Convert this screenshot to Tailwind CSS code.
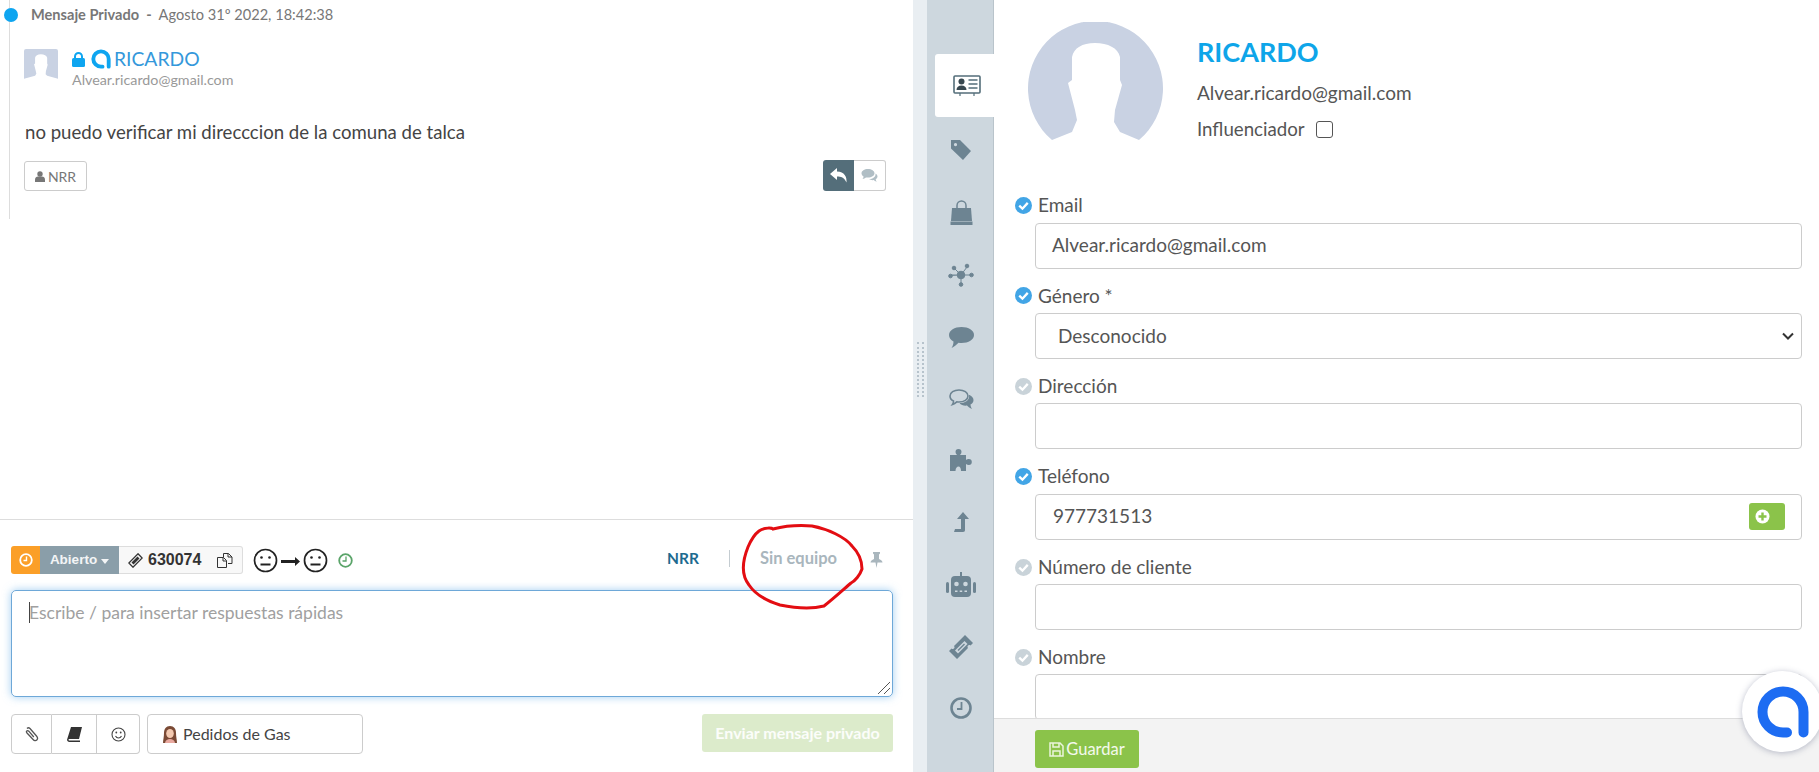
<!DOCTYPE html>
<html>

<head>
    <meta charset="UTF-8">
    <title>Ticket 630074</title>
    <script src="https://cdn.jsdelivr.net/npm/@tailwindcss/browser@4"></script>
</head>

<body class="relative h-screen overflow-hidden flex bg-white text-[#555] font-['Lato','Liberation_Sans',sans-serif]">

    <!-- conversation -->
    <div class="w-[913px] h-full flex flex-col">
        <div class="h-[520px] border-b border-[#ddd] relative pl-[9px]">
            <div class="h-[219px] border-l border-[#ddd] absolute left-[9px] top-0"></div>
            <div class="absolute left-[4px] top-[8px] w-[14px] h-[14px] rounded-full bg-[#0ea5f0]"></div>
            <div class="relative pl-[22px] pt-[5px] flex items-center text-[14.600px] leading-[20px] text-[#777]">
                <span class="font-bold">Mensaje Privado</span>
                <span class="mx-[7px] font-bold">-</span>
                <span>Agosto 31º 2022, 18:42:38</span>
            </div>
            <div class="relative pl-[15px] pt-[24px] flex">
                <svg class="w-[34px] h-[34px]" viewBox="0 0 135 135">
                    <rect width="135" height="135" rx="8" fill="#c9d2e3" />
                    <path d="M0 135V118L44 106 49 98 47 88 40 61 44 58V35C46 26 54 21 67 21S90 26 92 35V58L94 63 87 88 86 100 92 106 135 118V135z" fill="#fff" />
                </svg>
                <div class="ml-[14px] -mt-[1px]">
                    <div class="flex items-center h-[22px] text-[19.300px] text-[#3498db]">
                        <svg class="w-[13px] h-[15px] mr-[6px]" viewBox="0 0 13 15">
                            <path d="M3 7V4.500a3.500 3.500 0 0 1 7 0V7" fill="none" stroke="#0ea5f0" stroke-width="2" />
                            <rect y="6" width="13" height="9" rx="1.500" fill="#0ea5f0" />
                        </svg>
                        <svg class="w-[20px] h-[20px] mr-[3px]" viewBox="0 0 52 52">
                            <path d="M30 46H26A20 20 0 1 1 46 26V46" fill="none" stroke="#0ea5f0" stroke-width="10" stroke-linecap="round" />
                        </svg>
                        <span>RICARDO</span>
                    </div>
                    <div class="text-[14.300px] leading-[20px] text-[#999]">Alvear.ricardo@gmail.com</div>
                </div>
            </div>
            <p class="relative pl-[16px] mt-[29px] text-[18.600px] leading-[26px] text-[#444]">no puedo verificar mi direcccion de la comuna de talca</p>
            <div class="relative pl-[15px] pr-[27px] mt-[16px] flex justify-between items-center">
                <button class="w-[63px] h-[30px] border border-[#ccc] rounded-[3px] flex items-center justify-center text-[14px] text-[#777]">
                    <svg class="w-[10px] h-[11px] mr-[3px]" viewBox="0 0 10 11" fill="#777">
                        <circle cx="5" cy="3" r="2.700" />
                        <path d="M0 11V8.500C0 6.500 1.500 5.500 3 5.500h4c1.500 0 3 1 3 3V11z" />
                    </svg>
                    NRR
                </button>
                <div class="flex h-[31px] -mt-[2px]">
                    <div class="w-[31px] bg-[#546e7a] rounded-l-[3px] flex items-center justify-center">
                        <svg class="w-[18px] h-[15px]" viewBox="0 0 18 15" fill="#fff">
                            <path d="M7 0 0 6l7 6V8.500c4 0 7 .5 9.500 6 .5-6-2-10.500-9.500-11z" />
                        </svg>
                    </div>
                    <div class="w-[32px] border border-l-0 border-[#ccc] rounded-r-[3px] flex items-center justify-center">
                        <svg class="w-[17px] h-[15px]" viewBox="0 0 17 15" fill="#b0bec5">
                            <path d="M7 1c3.600 0 6.500 1.900 6.500 4.300S10.600 9.600 7 9.600c-.7 0-1.400-.1-2-.2C4 10.300 2.800 10.800 1.500 11c.7-.7 1-1.500 1.100-2.400C1.300 7.800.5 6.600.5 5.300.5 2.900 3.400 1 7 1z" />
                            <path d="M14.500 5.500c1.300.8 2 1.800 2 3 0 1.100-.7 2.100-1.800 2.800.1.900.4 1.800 1 2.500-1.200-.2-2.300-.8-3.100-1.700-1.700.2-3.400-.2-4.600-1.100 3.500.1 7-1.800 6.500-5.500z" />
                        </svg>
                    </div>
                </div>
            </div>
        </div>

        <!-- compose -->
        <div class="flex-1 pl-[11px] pr-[20px]">
            <div class="h-[28px] mt-[26px] flex items-center">
                <div class="w-[29px] h-full bg-[#fb9f28] rounded-l-[3px] flex items-center justify-center">
                    <svg class="w-[14px] h-[14px]" viewBox="0 0 14 14" fill="none" stroke="#fff" stroke-width="1.800">
                        <circle cx="7" cy="7" r="5.800" />
                        <path d="M7.500 3.500V7.500H4.500" stroke-width="1.400" />
                    </svg>
                </div>
                <div class="w-[79px] h-full bg-[#8a9ea9] flex items-center justify-center text-white/90 text-[13.500px] font-bold font-['Liberation_Sans',sans-serif]">
                    Abierto
                    <span class="ml-[4px] mt-[2px] border-x-[4.500px] border-x-transparent border-t-[5px] border-t-white/90"></span>
                </div>
                <div class="w-[124px] h-full bg-[#f8f8f8] border border-l-0 border-[#ddd] rounded-r-[3px] flex items-center pl-[9px] text-[16px] font-bold text-[#333] font-['Liberation_Sans',sans-serif]">
                    <svg class="w-[15px] h-[15px] mr-[5px]" viewBox="0 0 15 15" fill="none" stroke="#333" stroke-width="1.300">
                        <path d="M10 .8 14.200 5 5 14.200.8 10z" />
                        <path d="M9.500 3.500 11.500 5.500 5.500 11.500 3.500 9.500z" fill="#333" stroke="none" />
                    </svg>
                    630074
                    <svg class="w-[16px] h-[15px] ml-[16px]" viewBox="0 0 16 15" fill="none" stroke="#333" stroke-width="1">
                        <path d="M6.500 4.500V.5h5l3.500 3.500v6.500h-4M11 .5V4h4" />
                        <path d="M.5 4.500h6l3 3v7H.5zM6 4.500V8h3.500" fill="#f8f8f8" />
                    </svg>
                </div>
                <svg class="w-[25px] h-[25px] ml-[10px]" viewBox="0 0 25 25" fill="none" stroke="#222" stroke-width="1.700">
                    <circle cx="12.500" cy="12.500" r="11" />
                    <path d="M7.500 16.500h10" stroke-width="2" />
                    <circle cx="8.500" cy="9.500" r="1.300" fill="#222" stroke="none" />
                    <circle cx="16.500" cy="9.500" r="1.300" fill="#222" stroke="none" />
                </svg>
                <svg class="w-[19px] h-[9px] mx-[3px] mt-[3px]" viewBox="0 0 19 9" fill="#222">
                    <path d="M0 3h14V0l5 4.500L14 9V6H0z" />
                </svg>
                <svg class="w-[25px] h-[25px]" viewBox="0 0 25 25" fill="none" stroke="#222" stroke-width="1.700">
                    <circle cx="12.500" cy="12.500" r="11" />
                    <path d="M7.500 16.500h10" stroke-width="2" />
                    <circle cx="8.500" cy="9.500" r="1.300" fill="#222" stroke="none" />
                    <circle cx="16.500" cy="9.500" r="1.300" fill="#222" stroke="none" />
                </svg>
                <svg class="w-[15px] h-[15px] ml-[10px]" viewBox="0 0 15 15" fill="none" stroke="#5aa469" stroke-width="1.800">
                    <circle cx="7.500" cy="7.500" r="6.300" />
                    <path d="M8 3.500V8H4.500" stroke-width="1.300" />
                </svg>
                <span class="ml-auto -mt-[3px] text-[15.500px] font-bold text-[#1d6a8f]">NRR</span>
                <span class="ml-[30px] -mt-[3px] h-[17px] w-px bg-[#c4ccd1]"></span>
                <span class="ml-[30px] -mt-[3px] text-[16.500px] font-bold text-[#a9b6bd]">Sin equipo</span>
                <svg class="ml-[33px] mr-[10px] w-[13px] h-[16px]" viewBox="0 0 13 16" fill="#a9b6bd">
                    <path d="M3 0h7v1.500L9 2.500V7c2 1 3.500 2 3.500 3.500h-5l-1 5.500-1-5.500h-5C.5 9 2 8 4 7V2.500L3 1.500z" />
                </svg>
            </div>
            <div class="relative mt-[16px] h-[107px] border border-[#6ea8d8] rounded-[5px] shadow-[0_0_8px_rgba(102,175,233,0.6)] px-[17px] pt-[9px] text-[17.500px] leading-[26px] text-[#a0a0a0]">
                <span class="absolute left-[17px] top-[11px] w-px h-[21px] bg-[#444]"></span>
                Escribe / para insertar respuestas rápidas
                <svg class="absolute right-[1px] bottom-[1px] w-[14px] h-[14px]" viewBox="0 0 14 14" stroke="#555" stroke-width="1">
                    <path d="M1 13 13 1M7 13l6-6" />
                </svg>
            </div>
            <div class="mt-[17px] flex items-start">
                <button class="w-[41px] h-[40px] border border-[#ccc] rounded-l-[4px] flex items-center justify-center">
                    <svg class="w-[14px] h-[15px]" viewBox="0 0 14 15" fill="none" stroke="#555" stroke-width="1.300">
                        <path d="M3 1.500c1-1 2.200-.8 3 0l6.500 7.500c1.300 1.500 1.300 3 .3 4s-2.500.8-3.700-.5L3 6c-.7-.8-.7-1.500-.2-2s1.300-.5 2 .2l5 5.800" transform="translate(-1 0)" />
                    </svg>
                </button>
                <button class="w-[45px] h-[40px] border border-l-0 border-[#ccc] flex items-center justify-center">
                    <svg class="w-[15px] h-[15px]" viewBox="0 0 15 15" fill="#333">
                        <path d="M4 0h11l-3 12H2.500c-.8 0-1 .6-1 .8 0 .3.300.7 1 .7H13v1.500H2.500C1 15 0 14 0 12.800z" />
                    </svg>
                </button>
                <button class="w-[43px] h-[40px] border border-l-0 border-[#ccc] rounded-r-[4px] flex items-center justify-center">
                    <svg class="w-[15px] h-[15px]" viewBox="0 0 15 15" fill="none" stroke="#444" stroke-width="1.100">
                        <circle cx="7.500" cy="7.500" r="6.500" />
                        <path d="M4.500 9c.8 1.500 1.800 2 3 2s2.200-.5 3-2" />
                        <circle cx="5.300" cy="5.500" r=".9" fill="#444" stroke="none" />
                        <circle cx="9.700" cy="5.500" r=".9" fill="#444" stroke="none" />
                    </svg>
                </button>
                <div class="ml-[7px] w-[216px] h-[40px] border border-[#ccc] rounded-[4px] flex items-center pl-[15px] text-[16px] text-[#444]">
                    <svg class="w-[14px] h-[17px] mr-[6px]" viewBox="0 0 14 17">
                        <path d="M7 0c4 0 6 3 6 7 0 4 1 7 1 10H0c0-3 1-6 1-10 0-4 2-7 6-7z" fill="#7a4a35" />
                        <ellipse cx="7" cy="7.500" rx="3.800" ry="4.500" fill="#f3c9b0" />
                        <path d="M2 17c.5-3 2.500-4 5-4s4.500 1 5 4z" fill="#e9a9a0" />
                    </svg>
                    Pedidos de Gas
                </div>
                <button class="ml-auto w-[191px] h-[38px] rounded-[3px] bg-[#dcebcb] text-white/90 text-[16px] font-bold">Enviar mensaje privado</button>
            </div>
        </div>
    </div>

    <!-- resize handle -->
    <div class="w-[14px] h-full bg-[#e9eef2] flex items-center justify-center">
        <div class="w-[7px] h-[55px] mt-[-34px] border-x-2 border-dotted border-[#b7c3cc]"></div>
    </div>

    <!-- tabs -->
    <div class="w-[67px] h-full bg-[#cdd7de] border-r border-[#b9c4cb] pt-[54px] pl-[8px] flex flex-col">
        <div class="w-[59px] h-[63px] bg-white rounded-l-[3px] flex items-center justify-center pl-[4px] mb-[2px]">
            <svg class="w-[28px] h-[21px]" viewBox="0 0 28 21">
                <rect x="1" y="1" width="26" height="17" rx="1" fill="none" stroke="#546e7a" stroke-width="1.600" />
                <circle cx="8.500" cy="6.500" r="3" fill="#37474f" />
                <path d="M3.500 15c0-3 2-4.500 5-4.500s5 1.500 5 4.500z" fill="#37474f" />
                <path d="M15.500 5h9M15.500 9h9M15.500 13h9" stroke="#546e7a" stroke-width="1.500" />
                <path d="M7 18v3M21 18v3" stroke="#546e7a" stroke-width="1.200" />
            </svg>
        </div>
        <div class="w-[52px] h-[62px] flex items-center justify-center">
            <svg class="w-[22px] h-[22px]" viewBox="0 0 22 22" fill="#6d8492">
                <path d="M1 1h9l11 11-8 9L1 9.500zM5.500 4a1.600 1.600 0 1 0 .01 0z" fill-rule="evenodd" />
            </svg>
        </div>
        <div class="w-[52px] h-[62px] flex items-center justify-center">
            <svg class="w-[25px] h-[25px]" viewBox="0 0 25 25" fill="#6d8492">
                <path d="M3 8h19l1 13H2z" />
                <path d="M1.500 21.500h22V25h-22z" />
                <path d="M8 11V5.500a4.500 4.500 0 0 1 9 0V11" fill="none" stroke="#6d8492" stroke-width="1.500" />
            </svg>
        </div>
        <div class="w-[52px] h-[63px] flex items-center justify-center">
            <svg class="w-[26px] h-[24px]" viewBox="0 0 26 24" fill="#6d8492" stroke="#6d8492" stroke-width="1">
                <path d="M13 12 6 5M13 12l6-8M13 12H3l-1 1M13 12h10M13 12v9" />
                <circle cx="13" cy="12" r="3.800" />
                <circle cx="6" cy="5" r="1.800" />
                <circle cx="19" cy="3" r="1.800" />
                <circle cx="2.500" cy="13" r="1.800" />
                <circle cx="23.500" cy="12" r="1.800" />
                <circle cx="13" cy="21.500" r="1.800" />
            </svg>
        </div>
        <div class="w-[52px] h-[63px] flex items-center justify-center">
            <svg class="w-[25px] h-[21px]" viewBox="0 0 25 21" fill="#6d8492">
                <path d="M12.500 0C19.500 0 25 3.500 25 8s-5.500 8-12.500 8c-1 0-2-.1-3-.2C7.500 18 5 20 2.500 21c1-1.500 2-3.500 2-6.400C1.800 13.200 0 10.800 0 8 0 3.500 5.500 0 12.500 0z" />
            </svg>
        </div>
        <div class="w-[52px] h-[60px] flex items-center justify-center">
            <svg class="w-[25px] h-[21px]" viewBox="0 0 25 21">
                <path d="M10 1c5 0 9 2.500 9 6s-4 6-9 6c-.8 0-1.500 0-2.200-.2C6.500 14 5 15 3.500 15.500c.7-1 1-2 1-3.500C2.300 11 1 9 1 7c0-3.500 4-6 9-6z" fill="none" stroke="#6d8492" stroke-width="1.600" />
                <path d="M20.500 6c2.500 1 4 3 4 5s-1.200 3.700-3 4.600c.1 1.500.5 3 1.500 4.400-2-.5-3.800-2-5-3.400-3 .4-6-.6-7.500-2.600 5 .5 10.500-2.500 9.500-8z" fill="#6d8492" />
            </svg>
        </div>
        <div class="w-[52px] h-[61px] flex items-center justify-center">
            <svg class="w-[24px] h-[22px]" viewBox="0 0 24 22" fill="#6d8492">
                <path d="M1 6h7C7 5 6.500 4 6.500 3a3 3 0 0 1 6 0c0 1-.5 2-1.500 3h6v5c1-.8 1.800-1 2.800-1a3 3 0 0 1 0 6c-1 0-1.800-.3-2.800-1v7h-5c0-3-1-4.500-2.500-4.500S6.500 19 6.500 22H1z" />
            </svg>
        </div>
        <div class="w-[52px] h-[63px] flex items-center justify-center">
            <svg class="w-[15px] h-[20px]" viewBox="0 0 15 20" fill="#6d8492">
                <path d="M9 0 15 7h-4v11c0 1-.5 2-2 2H0l1-3h6V7H3z" />
            </svg>
        </div>
        <div class="w-[52px] h-[63px] flex items-center justify-center">
            <svg class="w-[30px] h-[25px]" viewBox="0 0 30 25" fill="#6d8492">
                <path d="M14 0h2v4h-2z" />
                <rect x="5" y="4" width="20" height="21" rx="4" />
                <rect y="10" width="3" height="11" rx="1.500" />
                <rect x="27" y="10" width="3" height="11" rx="1.500" />
                <circle cx="10.500" cy="12" r="2.300" fill="#cdd7de" />
                <circle cx="19.500" cy="12" r="2.300" fill="#cdd7de" />
                <path d="M9 18.500h2.500v1.500H9zM13.700 18.500h2.500v1.500h-2.500zM18.500 18.500H21v1.500h-2.500z" fill="#cdd7de" />
            </svg>
        </div>
        <div class="w-[52px] h-[61px] flex items-center justify-center">
            <svg class="w-[24px] h-[24px]" viewBox="0 0 24 24">
                <path d="M16 0 24 8l-2.500 2.500c-1-.8-2-.5-2.500 0s-.8 1.500 0 2.500L8 24l-8-8 2.500-2.500c1 .8 2 .5 2.500 0s.8-1.500 0-2.500z" fill="#6d8492" />
                <path d="M15.500 6 18.500 9 9 18.500 6 15.500z" fill="#cdd7de" />
                <path d="M15 8.500 16 9.500 9.500 16 8.500 15z" fill="#6d8492" />
            </svg>
        </div>
        <div class="w-[52px] h-[62px] flex items-center justify-center">
            <svg class="w-[22px] h-[22px]" viewBox="0 0 22 22" fill="none" stroke="#6d8492" stroke-width="2.600">
                <circle cx="11" cy="11" r="9.500" />
                <path d="M11.500 5v7H7" stroke-width="1.800" />
            </svg>
        </div>
    </div>

    <!-- contact panel -->
    <div class="flex-1 h-full flex flex-col min-w-0">
        <div class="flex-1 overflow-hidden">
            <div class="flex pl-[34px] pt-[22px] h-[195.500px]">
                <svg class="w-[135px] h-[118px]" viewBox="0 0 135 118">
                    <path d="M24 118A67.500 67.500 0 1 1 111 118L92 110 86 100 87 88 94 63 92 58V35C90 26 80 21 67 21S46 26 44 35V58L40 61 47 88 49 98 44 110z" fill="#c9d2e3" />
                </svg>
                <div class="ml-[34px]">
                    <div class="text-[27px] leading-[32px] font-bold text-[#0ea5e9] mt-[14px]">RICARDO</div>
                    <div class="text-[19px] leading-[24px] text-[#555] mt-[13px]">Alvear.ricardo@gmail.com</div>
                    <div class="flex items-center text-[18.700px] leading-[24px] text-[#555] mt-[12px]">
                        Influenciador
                        <span class="ml-[11px] w-[17px] h-[17px] border border-[#555] rounded-[3px]"></span>
                    </div>
                </div>
            </div>

            <div class="pl-[21px] pr-[17px] flex flex-col">
                <div class="h-[90.400px]">
                    <div class="flex items-center h-[27px] pb-[7px] text-[19px] text-[#555]">
                        <svg class="w-[17px] h-[17px] mr-[6px]" viewBox="0 0 16 16">
                            <circle cx="8" cy="8" r="8" fill="#42a5e6" />
                            <path d="M4 8.200 7 11 12 5.500" fill="none" stroke="#fff" stroke-width="2.200" />
                        </svg>
                        Email
                    </div>
                    <div class="ml-[20px] h-[46px] border border-[#ccc] rounded-[4px] flex items-center px-[16px] text-[19px] text-[#555]">Alvear.ricardo@gmail.com</div>
                </div>
                <div class="h-[90.400px]">
                    <div class="flex items-center h-[27px] pb-[7px] text-[19px] text-[#555]">
                        <svg class="w-[17px] h-[17px] mr-[6px]" viewBox="0 0 16 16">
                            <circle cx="8" cy="8" r="8" fill="#42a5e6" />
                            <path d="M4 8.200 7 11 12 5.500" fill="none" stroke="#fff" stroke-width="2.200" />
                        </svg>
                        Género *
                    </div>
                    <div class="ml-[20px] h-[46px] border border-[#ccc] rounded-[4px] flex items-center pl-[22px] pr-[7px] text-[19px] text-[#555]">
                        Desconocido
                        <svg class="ml-auto w-[12px] h-[8px]" viewBox="0 0 12 8" fill="none" stroke="#333" stroke-width="2">
                            <path d="M1 1.500 6 6.500 11 1.500" />
                        </svg>
                    </div>
                </div>
                <div class="h-[90.400px]">
                    <div class="flex items-center h-[27px] pb-[7px] text-[19px] text-[#555]">
                        <svg class="w-[17px] h-[17px] mr-[6px]" viewBox="0 0 16 16">
                            <circle cx="8" cy="8" r="8" fill="#c9d3d9" />
                            <path d="M4 8.200 7 11 12 5.500" fill="none" stroke="#fff" stroke-width="2.200" />
                        </svg>
                        Dirección
                    </div>
                    <div class="ml-[20px] h-[46px] border border-[#ccc] rounded-[4px]"></div>
                </div>
                <div class="h-[90.400px]">
                    <div class="flex items-center h-[27px] pb-[7px] text-[19px] text-[#555]">
                        <svg class="w-[17px] h-[17px] mr-[6px]" viewBox="0 0 16 16">
                            <circle cx="8" cy="8" r="8" fill="#42a5e6" />
                            <path d="M4 8.200 7 11 12 5.500" fill="none" stroke="#fff" stroke-width="2.200" />
                        </svg>
                        Teléfono
                    </div>
                    <div class="ml-[20px] h-[46px] border border-[#ccc] rounded-[4px] flex items-center pl-[17px] pr-[16px] text-[19px] text-[#555]">
                        977731513
                        <span class="ml-auto w-[36px] h-[27px] bg-[#8bc34a] rounded-[3px] flex items-center pl-[6px]">
                            <svg class="w-[15px] h-[15px]" viewBox="0 0 15 15">
                                <circle cx="7.500" cy="7.500" r="7" fill="#fff" />
                                <path d="M7.500 3.500v8M3.500 7.500h8" stroke="#8bc34a" stroke-width="2.400" />
                            </svg>
                        </span>
                    </div>
                </div>
                <div class="h-[90.400px]">
                    <div class="flex items-center h-[27px] pb-[7px] text-[19px] text-[#555]">
                        <svg class="w-[17px] h-[17px] mr-[6px]" viewBox="0 0 16 16">
                            <circle cx="8" cy="8" r="8" fill="#c9d3d9" />
                            <path d="M4 8.200 7 11 12 5.500" fill="none" stroke="#fff" stroke-width="2.200" />
                        </svg>
                        Número de cliente
                    </div>
                    <div class="ml-[20px] h-[46px] border border-[#ccc] rounded-[4px]"></div>
                </div>
                <div class="h-[90.400px]">
                    <div class="flex items-center h-[27px] pb-[7px] text-[19px] text-[#555]">
                        <svg class="w-[17px] h-[17px] mr-[6px]" viewBox="0 0 16 16">
                            <circle cx="8" cy="8" r="8" fill="#c9d3d9" />
                            <path d="M4 8.200 7 11 12 5.500" fill="none" stroke="#fff" stroke-width="2.200" />
                        </svg>
                        Nombre
                    </div>
                    <div class="ml-[20px] h-[46px] border border-[#ccc] rounded-[4px]"></div>
                </div>
            </div>
        </div>
        <div class="h-[54px] shrink-0 bg-[#f3f3f3] border-t border-[#ddd] pl-[41px] pt-[11px]">
            <button class="w-[104px] h-[38px] bg-[#8bc34a] rounded-[3px] flex items-center justify-center text-white/90 text-[16.500px]">
                <svg class="w-[15px] h-[15px] mr-[2px]" viewBox="0 0 15 15" fill="none" stroke="#eaf5dc" stroke-width="1.500">
                    <path d="M1 1h10l3 3v10H1z" />
                    <path d="M4 1v4h6V1M4 14V9h7v5" />
                </svg>
                Guardar
            </button>
        </div>
    </div>

    <!-- chat launcher -->
    <div class="absolute left-[1742px] top-[671px] w-[81px] h-[81px] rounded-full bg-white shadow-[0_1px_6px_rgba(60,70,110,0.35)] flex items-center justify-center">
        <svg class="w-[52px] h-[52px]" viewBox="0 0 52 52">
            <path d="M30 46.500H26A20.500 20.500 0 1 1 46.500 26V46.500" fill="none" stroke="#1d6cf2" stroke-width="10" stroke-linecap="round" />
        </svg>
    </div>

    <!-- red marker annotation -->
    <svg class="absolute left-0 top-0 w-[1819px] h-[772px] pointer-events-none" viewBox="0 0 1819 772" fill="none" stroke="#e30d12" stroke-width="3" stroke-linecap="round">
        <path d="M759 531C765 527 772 528 773 529C785 526 800 525 812 526C828 529 845 537 852 546C860 554 862 562 862 569C860 575 855 581 851 583C844 589 833 599 824 606C812 609 795 608 780 605C767 601 755 594 749 585C741 575 742 562 748 547C751 540 755 534 759 531" />
    </svg>

</body>

</html>
